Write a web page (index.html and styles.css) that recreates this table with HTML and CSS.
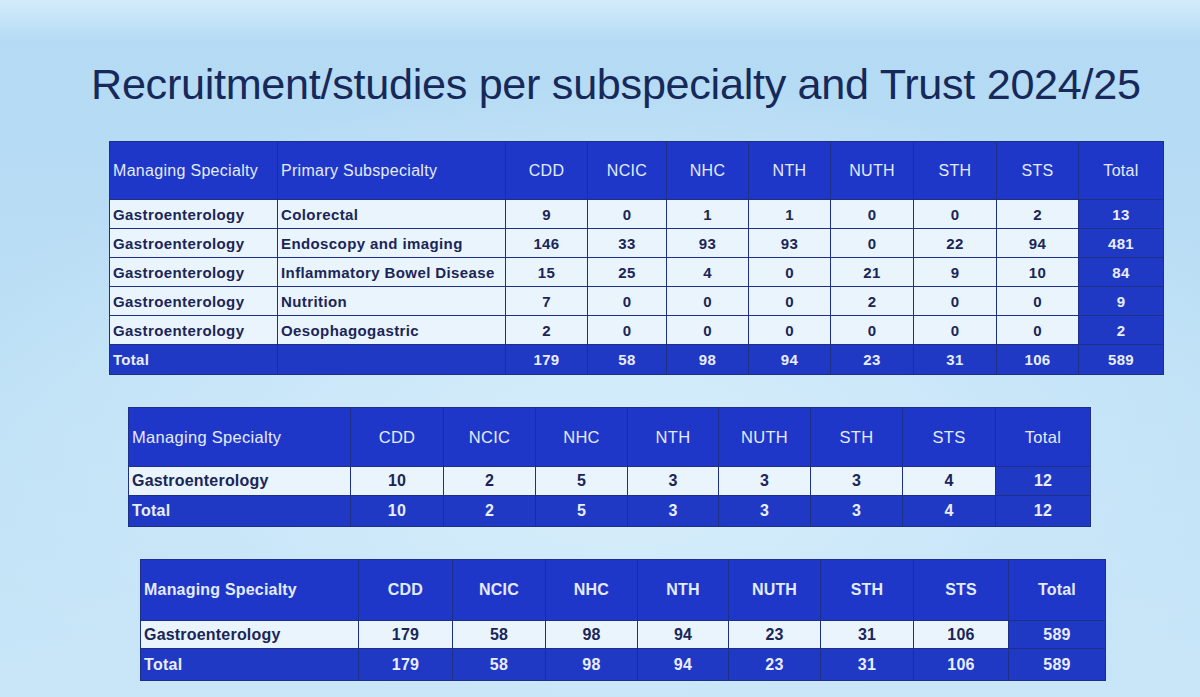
FILE: index.html
```html
<!DOCTYPE html>
<html>
<head>
<meta charset="utf-8">
<link rel="stylesheet" href="styles.css">
</head>
<body>
<div class="slide">
  <h1 class="title">Recruitment/studies per subspecialty and Trust 2024/25</h1>

  <table class="grid t1">
    <colgroup>
      <col style="width:168px"><col style="width:228px"><col style="width:82px"><col style="width:79px"><col style="width:82px"><col style="width:82px"><col style="width:83px"><col style="width:83px"><col style="width:82px"><col style="width:85px">
    </colgroup>
    <tr class="head">
      <th class="l">Managing Specialty</th><th class="l">Primary Subspecialty</th><th>CDD</th><th>NCIC</th><th>NHC</th><th>NTH</th><th>NUTH</th><th>STH</th><th>STS</th><th>Total</th>
    </tr>
    <tr class="row"><td class="l">Gastroenterology</td><td class="l">Colorectal</td><td>9</td><td>0</td><td>1</td><td>1</td><td>0</td><td>0</td><td>2</td><td class="sum">13</td></tr>
    <tr class="row"><td class="l">Gastroenterology</td><td class="l">Endoscopy and imaging</td><td>146</td><td>33</td><td>93</td><td>93</td><td>0</td><td>22</td><td>94</td><td class="sum">481</td></tr>
    <tr class="row"><td class="l">Gastroenterology</td><td class="l">Inflammatory Bowel Disease</td><td>15</td><td>25</td><td>4</td><td>0</td><td>21</td><td>9</td><td>10</td><td class="sum">84</td></tr>
    <tr class="row"><td class="l">Gastroenterology</td><td class="l">Nutrition</td><td>7</td><td>0</td><td>0</td><td>0</td><td>2</td><td>0</td><td>0</td><td class="sum">9</td></tr>
    <tr class="row"><td class="l">Gastroenterology</td><td class="l">Oesophagogastric</td><td>2</td><td>0</td><td>0</td><td>0</td><td>0</td><td>0</td><td>0</td><td class="sum">2</td></tr>
    <tr class="total"><td class="l">Total</td><td></td><td>179</td><td>58</td><td>98</td><td>94</td><td>23</td><td>31</td><td>106</td><td>589</td></tr>
  </table>

  <table class="grid t2">
    <colgroup>
      <col style="width:222px"><col style="width:93px"><col style="width:92px"><col style="width:92px"><col style="width:91px"><col style="width:92px"><col style="width:92px"><col style="width:93px"><col style="width:95px">
    </colgroup>
    <tr class="head">
      <th class="l">Managing Specialty</th><th>CDD</th><th>NCIC</th><th>NHC</th><th>NTH</th><th>NUTH</th><th>STH</th><th>STS</th><th>Total</th>
    </tr>
    <tr class="row"><td class="l">Gastroenterology</td><td>10</td><td>2</td><td>5</td><td>3</td><td>3</td><td>3</td><td>4</td><td class="sum">12</td></tr>
    <tr class="total"><td class="l">Total</td><td>10</td><td>2</td><td>5</td><td>3</td><td>3</td><td>3</td><td>4</td><td>12</td></tr>
  </table>

  <table class="grid t3">
    <colgroup>
      <col style="width:218px"><col style="width:94px"><col style="width:93px"><col style="width:92px"><col style="width:91px"><col style="width:92px"><col style="width:93px"><col style="width:95px"><col style="width:97px">
    </colgroup>
    <tr class="head">
      <th class="l">Managing Specialty</th><th>CDD</th><th>NCIC</th><th>NHC</th><th>NTH</th><th>NUTH</th><th>STH</th><th>STS</th><th>Total</th>
    </tr>
    <tr class="row"><td class="l">Gastroenterology</td><td>179</td><td>58</td><td>98</td><td>94</td><td>23</td><td>31</td><td>106</td><td class="sum">589</td></tr>
    <tr class="total"><td class="l">Total</td><td>179</td><td>58</td><td>98</td><td>94</td><td>23</td><td>31</td><td>106</td><td>589</td></tr>
  </table>
</div>
</body>
</html>
```

FILE: styles.css
```css
html, body {
  margin: 0;
  padding: 0;
}
body {
  width: 1200px;
  height: 697px;
  overflow: hidden;
  font-family: "Liberation Sans", Arial, sans-serif;
  background:
    radial-gradient(ellipse 900px 500px at 620px 480px, #d7eefb 0%, #c9e6f8 45%, rgba(190,224,246,0) 80%),
    linear-gradient(180deg, #d3ebfa 0px, #b5dbf4 40px, #b7dcf4 200px, #c8e6f8 697px);
}
.slide {
  padding-top: 58px;
  display: flex;
  flex-direction: column;
}
.title {
  margin: 0 0 0 91px;
  font-weight: normal;
  font-size: 43.2px;
  line-height: 52px;
  color: #16295a;
  letter-spacing: -0.3px;
}
.grid {
  border-collapse: collapse;
  table-layout: fixed;
  background: #2038c8;
}
.grid th, .grid td {
  border: 1.5px solid #1d2f86;
  padding: 0 3px;
  text-align: center;
  white-space: nowrap;
  overflow: hidden;
}
.grid .l { text-align: left; }
.head th {
  background: #1f37c9;
  color: #e3ebff;
  font-weight: normal;
  font-size: 16px;
  letter-spacing: 0.3px;
}
.row td {
  background: #e9f4fc;
  color: #1b2558;
  font-weight: bold;
  font-size: 15px;
  letter-spacing: 0.4px;
}
.row td.sum, .total td {
  background: #2039c4;
  color: #e8eeff;
  font-weight: bold;
  font-size: 15px;
  letter-spacing: 0.3px;
}
.t1 {
  margin: 31px 0 0 109px;
  width: 1054px;
}
.t1 .head th { height: 57px; }
.t1 .row td { height: 28px; }
.t1 .total td { height: 29px; }
.t2 {
  margin: 32px 0 0 128px;
  width: 962px;
}
.t2 .head th { height: 58px; font-size: 16.5px; }
.t2 .row td { height: 28px; font-size: 16px; letter-spacing: 0.2px; }
.t2 .total td { height: 30px; font-size: 16px; }
.t3 {
  margin: 32px 0 0 140px;
  width: 965px;
}
.t3 .head th { height: 60px; font-size: 16px; font-weight: bold; letter-spacing: 0.2px; }
.t3 .row td { height: 27px; font-size: 16px; letter-spacing: 0.2px; }
.t3 .total td { height: 31px; font-size: 16px; }
```
